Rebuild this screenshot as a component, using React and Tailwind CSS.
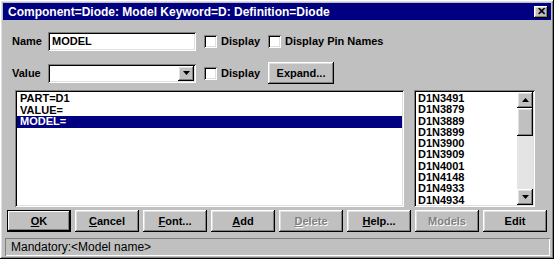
const raised =
  'shadow-[inset_-1px_-1px_#000,inset_1px_1px_#fff,inset_-2px_-2px_#808080,inset_2px_2px_#dfdfdf]';
const sunken =
  'shadow-[inset_1px_1px_#808080,inset_-1px_-1px_#fff,inset_2px_2px_#000,inset_-2px_-2px_#dfdfdf]';

function Check({ label, width }) {
  return (
    <div className={`flex items-center gap-[4px] ${width}`}>
      <span className={`w-[13px] h-[13px] bg-white ${sunken}`} />
      <span className="font-bold text-[11px]">{label}</span>
    </div>
  );
}

function Btn({ children, disabled, isDefault }) {
  return (
    <div
      className={`w-[64px] h-[22px] flex items-center justify-center text-[11px] font-bold ${
        isDefault
          ? 'shadow-[inset_0_0_0_1px_#000,inset_-2px_-2px_#000,inset_2px_2px_#fff,inset_-3px_-3px_#808080]'
          : raised
      } ${disabled ? 'text-[#808080] [text-shadow:1px_1px_0_#fff]' : 'text-black'}`}
    >
      {children}
    </div>
  );
}

const models = [
  'D1N3491',
  'D1N3879',
  'D1N3889',
  'D1N3899',
  'D1N3900',
  'D1N3909',
  'D1N4001',
  'D1N4148',
  'D1N4933',
  'D1N4934',
];

export default function App() {
  return (
    <div
      className={`w-[554px] h-[259px] bg-[#c0c0c0] p-[3px] flex flex-col text-black ${raised}`}
      style={{ fontFamily: '"Liberation Sans", Arial, sans-serif' }}
    >
      {/* title bar */}
      <div className="h-[17px] bg-[#000080] flex items-center justify-between pl-[5px] pr-[3px]">
        <span className="text-white font-bold text-[12px]">
          Component=Diode: Model Keyword=D: Definition=Diode
        </span>
        <span
          className={`w-[14px] h-[12px] bg-[#c0c0c0] flex items-center justify-center text-[11px] font-bold leading-none ${raised}`}
        >
          ✕
        </span>
      </div>

      {/* name row */}
      <div className="flex items-center mt-[12px] pl-[9px]">
        <span className="w-[36px] font-bold text-[11px]">Name</span>
        <div className={`w-[148px] h-[19px] bg-white flex items-center pl-[4px] ${sunken}`}>
          <span className="font-bold text-[11px]">MODEL</span>
        </div>
        <div className="ml-[8px]">
          <Check label="Display" width="w-[64px]" />
        </div>
        <Check label="Display Pin Names" />
      </div>

      {/* value row */}
      <div className="flex items-center mt-[11px] pl-[9px]">
        <span className="w-[36px] font-bold text-[11px]">Value</span>
        <div className={`w-[148px] h-[19px] bg-white flex items-center justify-end p-[2px] ${sunken}`}>
          <div className={`w-[16px] h-[15px] bg-[#c0c0c0] flex items-center justify-center ${raised}`}>
            <svg width="7" height="4" viewBox="0 0 7 4">
              <path d="M0 0h7L3.5 4z" fill="#000" />
            </svg>
          </div>
        </div>
        <div className="ml-[8px]">
          <Check label="Display" width="w-[64px]" />
        </div>
        <div className={`w-[66px] h-[22px] flex items-center justify-center font-bold text-[11px] ${raised}`}>
          Expand...
        </div>
      </div>

      {/* lists */}
      <div className="flex mt-[6px] pl-[12px] gap-[10px] h-[117px]">
        <div className={`w-[389px] bg-white p-[2px] ${sunken}`}>
          <div className="font-bold text-[11px] leading-[11.5px] pt-[1px]">
            <div className="pl-[3px]">PART=D1</div>
            <div className="pl-[3px]">VALUE=</div>
            <div className="pl-[3px] bg-[#000080] text-white h-[12px]">MODEL=</div>
          </div>
        </div>
        <div className={`w-[121px] bg-white p-[2px] flex ${sunken}`}>
          <div className="flex-1 font-bold text-[11px] leading-[11.3px] pl-[2px] pt-[1px]">
            {models.map((m) => (
              <div key={m}>{m}</div>
            ))}
          </div>
          <div className="w-[16px] flex flex-col bg-[#e4e4e4]">
            <div className={`h-[16px] bg-[#c0c0c0] flex items-center justify-center ${raised}`}>
              <svg width="7" height="4" viewBox="0 0 7 4">
                <path d="M0 4h7L3.5 0z" fill="#000" />
              </svg>
            </div>
            <div className={`h-[28px] bg-[#c0c0c0] ${raised}`} />
            <div className="flex-1" />
            <div className={`h-[16px] bg-[#c0c0c0] flex items-center justify-center ${raised}`}>
              <svg width="7" height="4" viewBox="0 0 7 4">
                <path d="M0 0h7L3.5 4z" fill="#000" />
              </svg>
            </div>
          </div>
        </div>
      </div>

      {/* buttons */}
      <div className="flex gap-[4px] mt-[3px] pl-[4px]">
        <Btn isDefault>
          <u>O</u>K
        </Btn>
        <Btn>
          <u>C</u>ancel
        </Btn>
        <Btn>
          <u>F</u>ont...
        </Btn>
        <Btn>
          <u>A</u>dd
        </Btn>
        <Btn disabled>
          <u>D</u>elete
        </Btn>
        <Btn>
          <u>H</u>elp...
        </Btn>
        <Btn disabled>Models</Btn>
        <Btn>Edit</Btn>
      </div>

      {/* status bar */}
      <div
        className={`mt-[6px] ml-[2px] mr-[1px] h-[20px] flex items-center pl-[6px] text-[12px] shadow-[inset_1px_1px_#808080,inset_-1px_-1px_#fff]`}
      >
        Mandatory:&lt;Model name&gt;
      </div>
    </div>
  );
}
